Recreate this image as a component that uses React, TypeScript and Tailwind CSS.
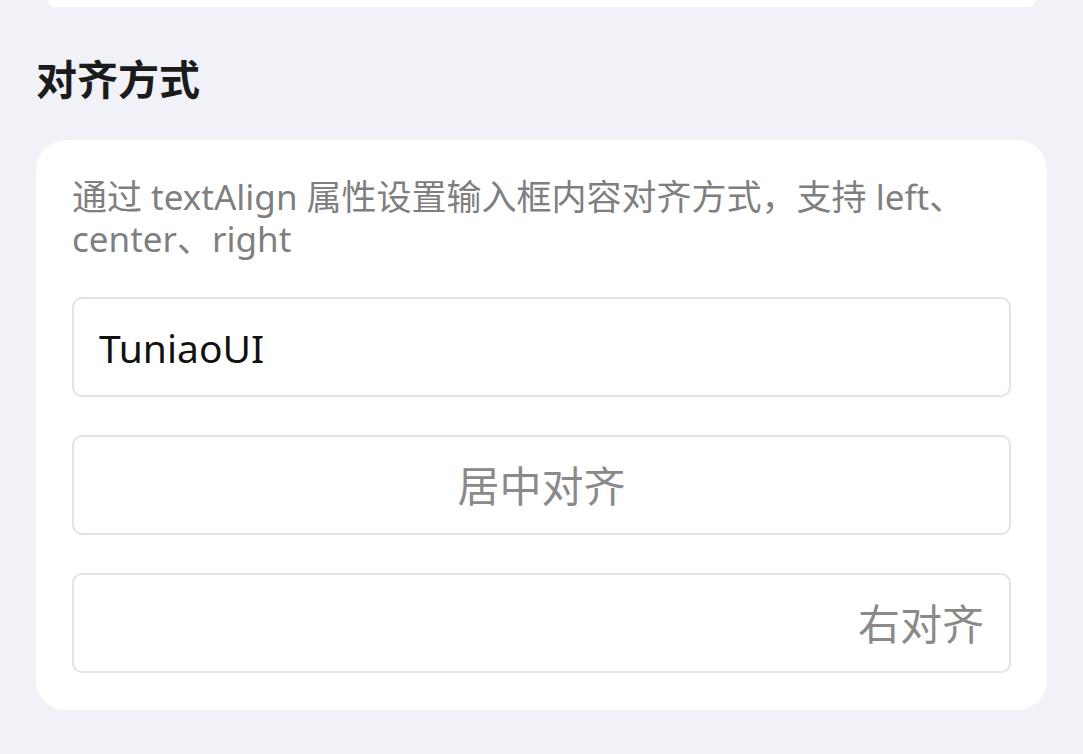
const font = { fontFamily: '"Noto Sans", "Noto Sans CJK SC", sans-serif' }

function Field({ value, placeholder, align }: { value?: string; placeholder?: string; align: 'left' | 'center' | 'right' }) {
  const alignClass = align === 'left' ? 'text-left' : align === 'center' ? 'text-center' : 'text-right'
  return (
    <div className="flex h-[100px] items-center rounded-[10px] border-2 border-[#e3e3e3] bg-white px-[25px]">
      <input
        readOnly
        value={value ?? ''}
        placeholder={placeholder}
        className={`w-full bg-transparent leading-none text-[#111] outline-none placeholder:text-[#8a8a8a] ${value ? 'text-[39px]' : 'text-[42px]'} ${alignClass}`}
        style={font}
      />
    </div>
  )
}

export default function App() {
  return (
    <div className="min-h-[754px] w-full overflow-hidden bg-[#f1f2f7]" style={font}>
      <div className="mx-[48px] h-[7px] rounded-b-[10px] bg-white" />

      <h2 className="ml-[36px] mt-[52px] text-[41px] font-bold leading-[40px] text-[#1b1b1b]">对齐方式</h2>

      <div className="mx-[36px] mt-[41px] rounded-[30px] bg-white px-[36px] pb-[37px] pt-[36px]">
        <p className="text-[35px] leading-[42px] text-[#7f7f7f]">
          通过 textAlign 属性设置输入框内容对齐方式，支持 left、center、right
        </p>

        <div className="mt-[37px] flex flex-col gap-[38px]">
          <Field value="TuniaoUI" align="left" />
          <Field placeholder="居中对齐" align="center" />
          <Field placeholder="右对齐" align="right" />
        </div>
      </div>
    </div>
  )
}
